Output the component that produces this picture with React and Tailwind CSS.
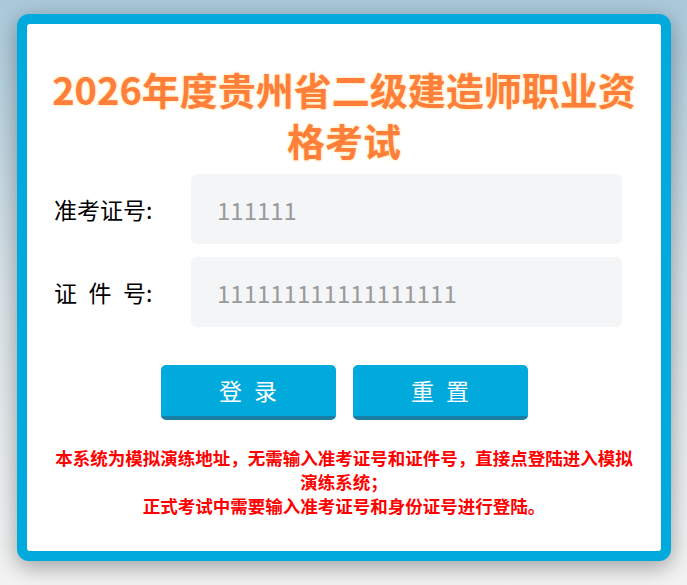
import React, { useState } from 'react';

const App = () => {
  const [examNo, setExamNo] = useState('');
  const [idNo, setIdNo] = useState('');

  const reset = () => {
    setExamNo('');
    setIdNo('');
  };

  return (
    <div
      className="min-h-screen bg-gradient-to-b from-[#a9c9da] via-[#d9e3e8] to-[#f3f3f3] px-[17px] pt-[14px] pb-[21px]"
      style={{ fontFamily: '"Noto Sans CJK SC", "Noto Sans", sans-serif' }}
    >
      <div className="w-[654px] rounded-[12px] bg-[#00aadc] p-[10px] shadow-[0_6px_22px_rgba(0,0,0,0.35)]">
        <div className="rounded-[3px] bg-white px-[22px] pt-[39px] pb-[33px]">
          <h1 className="text-center text-[38px] leading-[51px] font-bold text-[#ff7e3a] [text-shadow:0_0_3px_#ffd98a]">
            2026年度贵州省二级建造师职业资格考试
          </h1>

          <div className="mt-[9px] flex flex-col gap-[13px] pl-[5px]">
            <div className="flex items-center">
              <label className="w-[137px] text-[23px] text-black">准考证号:</label>
              <input
                value={examNo}
                onChange={(e) => setExamNo(e.target.value)}
                placeholder="111111"
                className="h-[70px] w-[431px] rounded-[6px] bg-[#f3f5f7] pl-[26px] text-[24px] text-[#333] outline-none placeholder:text-[#9a9a9a]"
              />
            </div>
            <div className="flex items-center">
              <label className="w-[137px] text-[23px] text-black">证{'\u2002'}件{'\u2002'}号:</label>
              <input
                value={idNo}
                onChange={(e) => setIdNo(e.target.value)}
                placeholder="111111111111111111"
                className="h-[70px] w-[431px] rounded-[6px] bg-[#f3f5f7] pl-[26px] text-[24px] text-[#333] outline-none placeholder:text-[#9a9a9a]"
              />
            </div>
          </div>

          <div className="mt-[38px] flex justify-center gap-[17px]">
            <button className="h-[55px] w-[175px] rounded-[5px] border-b-[4px] border-[#1b7ea5] bg-[#00aadc] pl-[12px] text-[23px] tracking-[12px] text-white">
              登录
            </button>
            <button
              onClick={reset}
              className="h-[55px] w-[175px] rounded-[5px] border-b-[4px] border-[#1b7ea5] bg-[#00aadc] pl-[12px] text-[23px] tracking-[12px] text-white"
            >
              重置
            </button>
          </div>

          <p className="mt-[26px] text-center text-[17.5px] leading-[24px] font-bold text-[#ff0000]">
            本系统为模拟演练地址，无需输入准考证号和证件号，直接点登陆进入模拟演练系统；
            <br />
            正式考试中需要输入准考证号和身份证号进行登陆。
          </p>
        </div>
      </div>
    </div>
  );
};

export default App;
